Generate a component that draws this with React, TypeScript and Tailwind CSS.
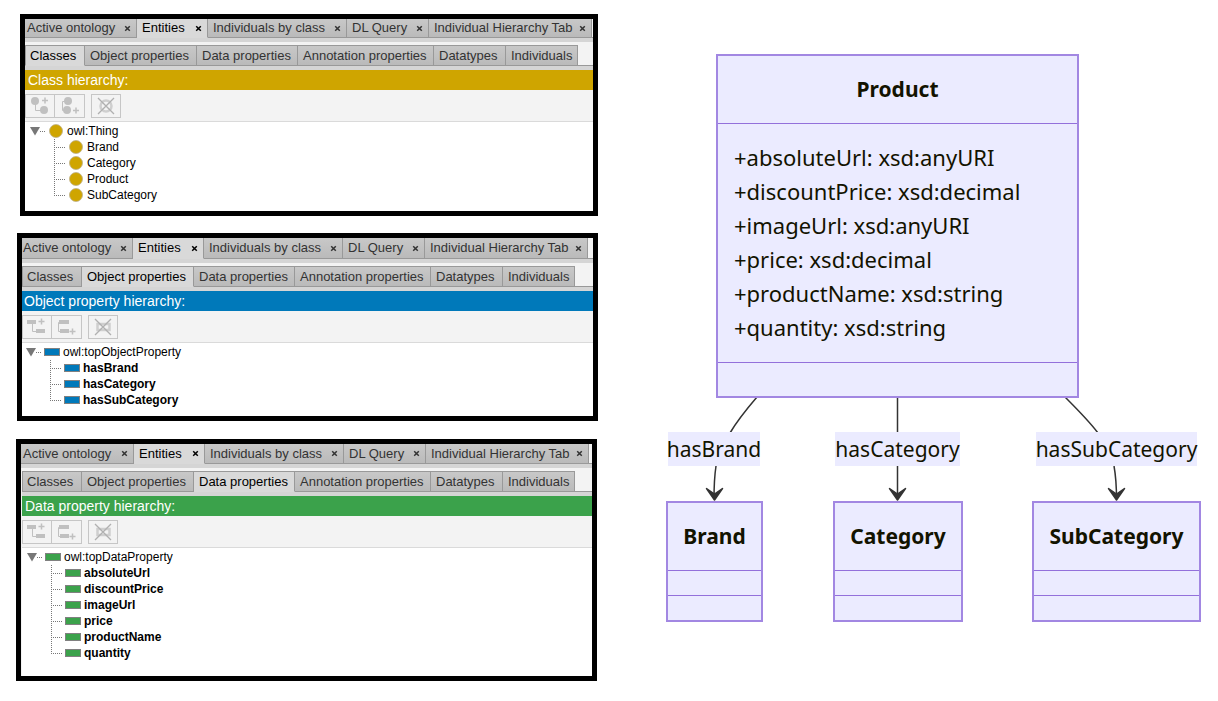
import type { ReactNode } from 'react';

type Kind = 'class' | 'object' | 'data';

type PanelData = {
  kind: Kind;
  active: string;
  heading: string;
  root: string;
  items: string[];
  frame: string;
  inset: string;
  topRow: string;
  firstTab: string;
  bar: string;
  treePad: string;
  treeBottom: string;
};

const panels: PanelData[] = [
  {
    kind: 'class',
    active: 'Classes',
    heading: 'Class hierarchy:',
    root: 'owl:Thing',
    items: ['Brand', 'Category', 'Product', 'SubCategory'],
    frame: 'ml-5',
    inset: '',
    topRow: 'h-[19px]',
    firstTab: 'w-[112px] pl-[2px]',
    bar: 'bg-[#cfa500] pl-[3px]',
    treePad: 'pl-[5px]',
    treeBottom: 'pb-2',
  },
  {
    kind: 'object',
    active: 'Object properties',
    heading: 'Object property hierarchy:',
    root: 'owl:topObjectProperty',
    items: ['hasBrand', 'hasCategory', 'hasSubCategory'],
    frame: 'ml-[17px] mt-[17px]',
    inset: '',
    topRow: 'h-[21px]',
    firstTab: 'w-[111px] pl-px',
    bar: 'bg-[#0079ba] pl-[2px]',
    treePad: 'pl-1',
    treeBottom: 'pb-2',
  },
  {
    kind: 'data',
    active: 'Data properties',
    heading: 'Data property hierarchy:',
    root: 'owl:topDataProperty',
    items: ['absoluteUrl', 'discountPrice', 'imageUrl', 'price', 'productName', 'quantity'],
    frame: 'ml-4 mr-px mt-[18px]',
    inset: 'pl-px',
    topRow: 'h-5',
    firstTab: 'w-[113px] pl-[2px]',
    bar: 'bg-[#3ba24b] pl-[3px]',
    treePad: 'pl-[5px]',
    treeBottom: 'pb-[15px]',
  },
];

const mainTabs = [
  { label: 'Active ontology', width: '' },
  { label: 'Entities', width: 'w-[71px]' },
  { label: 'Individuals by class', width: 'w-[139px]' },
  { label: 'DL Query', width: 'w-[82px]' },
  { label: 'Individual Hierarchy Tab', width: 'w-[163px]' },
];

const subTabs = [
  { label: 'Classes', width: 'w-[60px]' },
  { label: 'Object properties', width: 'w-[112px]' },
  { label: 'Data properties', width: 'w-[101px]' },
  { label: 'Annotation properties', width: 'w-[136px]' },
  { label: 'Datatypes', width: 'w-[72px]' },
  { label: 'Individuals', width: 'w-[72px]' },
];

const idle = 'border-b border-b-[#999] bg-linear-to-b from-[#c8c8c8] to-[#bababa] text-[#333]';
const chosen = 'border-b border-b-[#d9d9d9] bg-[#d9d9d9] text-black';

function MainTabs({ panel }: { panel: PanelData }) {
  return (
    <div className="border-b-4 border-[#d5d5d5]">
      <div className={`flex ${panel.topRow}`}>
        {mainTabs.map((tab, i) => (
          <div
            key={tab.label}
            className={`flex shrink-0 items-center justify-between border-r border-r-[#999] pr-[5px] ${
              i === 0 ? panel.firstTab : `pl-[5px] ${tab.width}`
            } ${tab.label === 'Entities' ? chosen : idle}`}
          >
            <button type="button" className="whitespace-nowrap text-[13px] leading-4">
              {tab.label}
            </button>
            <button type="button" aria-label={`Close ${tab.label}`} className="w-[7px]">
              <svg width="7" height="7" viewBox="0 0 7 7" className="block" stroke="currentColor" strokeWidth="1.5">
                <path d="M1.2 1.2L5.8 5.8M5.8 1.2L1.2 5.8" />
              </svg>
            </button>
          </div>
        ))}
        <div className="flex-1 border-b border-[#999]" />
      </div>
    </div>
  );
}

function SubTabs({ active }: { active: string }) {
  return (
    <div className="border-b-4 border-[#d5d5d5] pt-[3px]">
      <div className="flex h-[21px]">
        {subTabs.map((tab, i) => (
          <button
            key={tab.label}
            type="button"
            className={`shrink-0 whitespace-nowrap border-r border-t border-r-[#999] border-t-[#999] text-left text-[13px] leading-4 ${
              i === 0 ? 'border-l border-l-[#999] pl-1' : 'pl-[5px]'
            } ${tab.width} ${tab.label === active ? chosen : idle}`}
          >
            {tab.label}
          </button>
        ))}
        <div className="flex-1 border-b border-[#999]" />
      </div>
    </div>
  );
}

function ToolButton({ label, className = '', children }: { label: string; className?: string; children: ReactNode }) {
  return (
    <button
      type="button"
      aria-label={label}
      className={`h-6 border border-[#c6c6c6] bg-[#f3f3f3] ${className}`}
    >
      <svg width="28" height="22" viewBox="1 1 28 22" className="block" fill="#c0c0c0" stroke="#c0c0c0" strokeWidth="0">
        {children}
      </svg>
    </button>
  );
}

function Toolbar({ kind }: { kind: Kind }) {
  const round = kind === 'class';
  return (
    <div className="flex h-8 border-b border-[#dadada] pt-1">
      <ToolButton label="Add child" className="w-[30px]">
        {round ? (
          <>
            <circle cx="10" cy="7" r="4" />
            <circle cx="19" cy="16" r="4" />
            <path d="M10.5 10V16.5H16" fill="none" strokeWidth="1" />
            <path d="M17 6.5H23M20 3.5V9.5" fill="none" strokeWidth="1.5" />
          </>
        ) : (
          <>
            <path d="M5 5h9v4H5zM14 14h9v4h-9z" />
            <path d="M10.5 9V16.5H14" fill="none" strokeWidth="1" />
            <path d="M16.5 6.5H22.5M19.5 3.5V9.5" fill="none" strokeWidth="1.5" />
          </>
        )}
      </ToolButton>
      <ToolButton label="Add sibling" className="-ml-px w-[31px]">
        {round ? (
          <>
            <circle cx="14" cy="7" r="4" />
            <circle cx="13" cy="16" r="4" />
            <path d="M12 7.5H8.5V16.5H10" fill="none" strokeWidth="1" />
            <path d="M19 16.5H25M22 13.5V19.5" fill="none" strokeWidth="1.5" />
          </>
        ) : (
          <>
            <path d="M8 5h10v4H8zM9 14h9v4H9z" />
            <path d="M10 7.5H7.5V16.5H11" fill="none" strokeWidth="1" />
            <path d="M18.5 16.5H24.5M21.5 13.5V19.5" fill="none" strokeWidth="1.5" />
          </>
        )}
      </ToolButton>
      <ToolButton label="Delete" className="ml-[6px] w-[30px]">
        {round ? (
          <circle cx="15" cy="12" r="5.5" fill="none" strokeWidth="2.5" stroke="#cfcfcf" />
        ) : (
          <path d="M9.5 9h12v6h-12z" fill="none" strokeWidth="2.5" stroke="#cfcfcf" />
        )}
        <path d="M7 4L23 20M23 4L7 20" fill="none" stroke="#b0b0b0" strokeWidth="1.3" />
      </ToolButton>
    </div>
  );
}

function Marker({ kind }: { kind: Kind }) {
  if (kind === 'class') {
    return (
      <svg width="14" height="14" viewBox="0 0 14 14" className="ml-[3px] mr-1 shrink-0">
        <circle cx="7" cy="7" r="6.5" fill="#cfa500" stroke="#bcb08a" strokeWidth="0.8" />
      </svg>
    );
  }
  return (
    <svg width="16" height="8" viewBox="0 0 16 8" className="ml-[2px] mr-[3px] shrink-0">
      <rect x="0.5" y="0.5" width="15" height="7" fill={kind === 'object' ? '#0079ba' : '#3ba24b'} stroke="#808080" />
    </svg>
  );
}

function Tree({ panel }: { panel: PanelData }) {
  const bold = panel.kind === 'class' ? '' : 'font-bold';
  return (
    <ul className={`bg-white pt-px text-xs leading-4 text-black ${panel.treePad} ${panel.treeBottom}`}>
      <li>
        <div className="flex h-4 items-center">
          <svg width="16" height="16" viewBox="0 0 16 16" className="shrink-0">
            <path d="M0 4H10L5 12.5Z" fill="#777" />
            <path d="M10 8.5H16" stroke="#777" strokeDasharray="1 1" />
          </svg>
          <Marker kind={panel.kind} />
          {panel.root}
        </div>
        <ul className="pl-6">
          {panel.items.map((item, i) => (
            <li key={item} className={`flex h-4 items-center ${bold}`}>
              <svg width="12" height="16" viewBox="0 0 12 16" className="shrink-0" stroke="#777" strokeDasharray="1 1">
                <path d={i === panel.items.length - 1 ? 'M0.5 0V9' : 'M0.5 0V16'} />
                <path d="M0 8.5H12" />
              </svg>
              <Marker kind={panel.kind} />
              {item}
            </li>
          ))}
        </ul>
      </li>
    </ul>
  );
}

function Panel({ panel }: { panel: PanelData }) {
  return (
    <section className={`border-[5px] border-black bg-[#f3f3f3] ${panel.frame}`}>
      <MainTabs panel={panel} />
      <div className={panel.inset}>
        <SubTabs active={panel.active} />
        <h2 className={`h-5 text-sm leading-5 text-white ${panel.bar}`}>{panel.heading}</h2>
        <Toolbar kind={panel.kind} />
        <Tree panel={panel} />
      </div>
    </section>
  );
}

const attributes = [
  'absoluteUrl: xsd:anyURI',
  'discountPrice: xsd:decimal',
  'imageUrl: xsd:anyURI',
  'price: xsd:decimal',
  'productName: xsd:string',
  'quantity: xsd:string',
];

const leaves = [
  { name: 'Brand', place: 'left-[68px] w-[97px]' },
  { name: 'Category', place: 'left-[235px] w-[130px]' },
  { name: 'SubCategory', place: 'left-[434px] w-[169px]' },
];

const relations = [
  { name: 'hasBrand', place: 'left-[70px] w-[92px]' },
  { name: 'hasCategory', place: 'left-[237px] w-[125px]' },
  { name: 'hasSubCategory', place: 'left-[438px] w-[161px]' },
];

const box = 'absolute border-2 border-[#a287e2] bg-[#ebebff]';
const title = 'flex h-[67px] items-center justify-center text-[21px] font-bold';

function Diagram() {
  return (
    <section
      aria-label="Class diagram"
      className="relative min-h-[640px] min-w-[620px] flex-1 font-['Noto_Sans',sans-serif] text-[21px] text-[#131300]"
    >
      <svg width="620" height="640" viewBox="598 0 620 640" className="absolute left-0 top-0" fill="none" stroke="#333" strokeWidth="1.5">
        <path d="M757 397C745 411 737 421 730 433M716 466C714.5 476 714 486 714 499" />
        <path d="M897.5 397V499" />
        <path d="M1065 397C1078 410 1089 421 1098 433M1114 466C1116 477 1116.5 486 1116.5 499" />
        <g fill="#333" strokeLinejoin="round">
          <path d="M714.5 500L706.5 488.5L714.5 494L722.5 488.5Z" />
          <path d="M897.5 500L889.5 488.5L897.5 494L905.5 488.5Z" />
          <path d="M1116.5 500L1108.5 488.5L1116.5 494L1124.5 488.5Z" />
        </g>
      </svg>
      <article className={`${box} left-[118px] top-[54px] w-[363px]`}>
        <h3 className={title}>Product</h3>
        <ul className="h-[240px] border-y border-[#9370db] pl-4 pt-4 text-[22px] leading-[34px]">
          {attributes.map((a) => (
            <li key={a} className="whitespace-nowrap">+{a}</li>
          ))}
        </ul>
        <div className="h-[33px]" />
      </article>
      {relations.map((r) => (
        <div key={r.name} className={`absolute top-[432px] flex h-[34px] justify-center whitespace-nowrap bg-[#ebebff] leading-[34px] ${r.place}`}>
          {r.name}
        </div>
      ))}
      {leaves.map((l) => (
        <article key={l.name} className={`${box} top-[501px] ${l.place}`}>
          <h3 className={title}>{l.name}</h3>
          <div className="h-[26px] border-y border-[#9370db]" />
          <div className="h-6" />
        </article>
      ))}
    </section>
  );
}

export default function App() {
  return (
    <main className="flex min-h-screen bg-white font-['Liberation_Sans',Arial,sans-serif]">
      <div className="w-[598px] shrink-0 pb-5 pt-[14px]">
        {panels.map((p) => (
          <Panel key={p.kind} panel={p} />
        ))}
      </div>
      <Diagram />
    </main>
  );
}
